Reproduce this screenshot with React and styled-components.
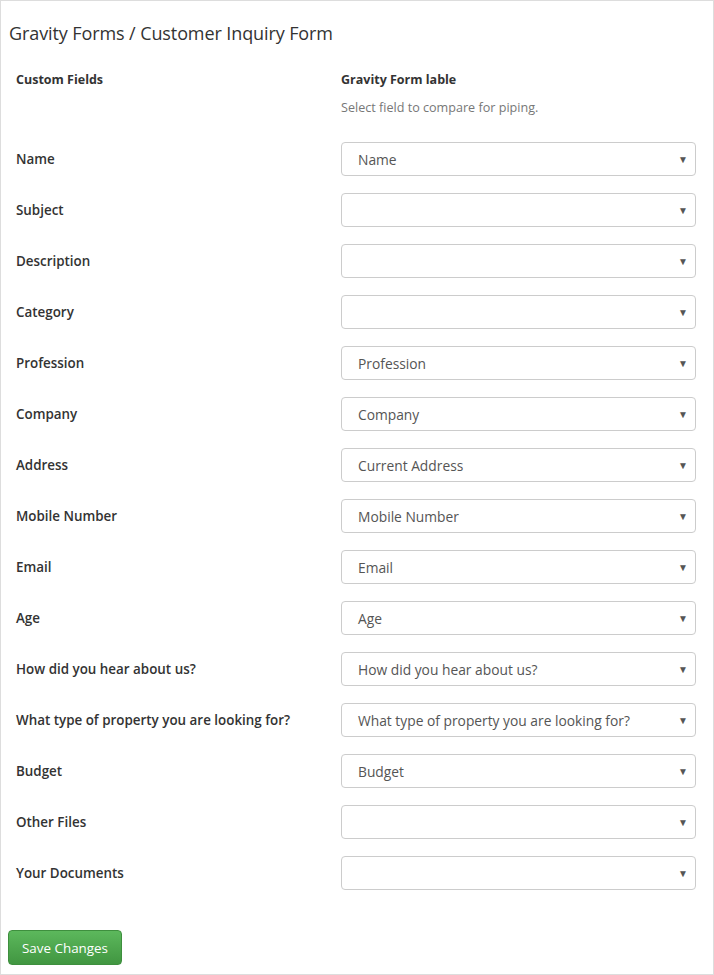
import React from 'react';
import styled, { createGlobalStyle } from 'styled-components';

const GlobalStyle = createGlobalStyle`
  html, body {
    margin: 0;
    padding: 0;
    background: #fff;
  }
  body {
    font-family: 'Open Sans', 'Noto Sans', sans-serif;
    color: #333;
  }
`;

const Panel = styled.div`
  box-sizing: border-box;
  width: 714px;
  height: 975px;
  border: 1px solid #ddd;
  background: #fff;
  display: flex;
  flex-direction: column;
`;

const Title = styled.h2`
  margin: 0;
  padding: 20px 0 0 8px;
  font-size: 18px;
  line-height: 24px;
  font-weight: 500;
  color: #333;
  letter-spacing: -0.1px;
`;

const Grid = styled.div`
  display: grid;
  grid-template-columns: 325px 1fr;
  padding: 0 17px 0 15px;
`;

const HeaderCell = styled.div`
  padding-top: 26px;
  font-size: 12.5px;
  font-weight: 700;
  line-height: 18px;
  color: #333;
`;

const Hint = styled.div`
  margin-top: 10px;
  font-size: 12.6px;
  font-weight: 400;
  line-height: 18px;
  color: #777;
`;

const Rows = styled.div`
  grid-column: 1 / -1;
  display: grid;
  grid-template-columns: 325px 1fr;
  row-gap: 17px;
  margin-top: 25px;
`;

const Label = styled.div`
  display: flex;
  align-items: center;
  height: 34px;
  font-size: 13.4px;
  font-weight: 600;
  color: #333;
`;

const Select = styled.div`
  box-sizing: border-box;
  height: 34px;
  border: 1px solid #ccc;
  border-radius: 4px;
  background: #fff;
  display: flex;
  align-items: center;
  justify-content: space-between;
  padding: 0 7px 0 16px;
  font-size: 13.8px;
  color: #555;
`;

const Arrow = styled.span`
  font-size: 10px;
  color: #555;
`;

const Footer = styled.div`
  margin-top: auto;
  padding: 0 0 9px 7px;
`;

const SaveButton = styled.button`
  box-sizing: border-box;
  width: 114px;
  height: 35px;
  border: 1px solid #3e8f3e;
  border-radius: 4px;
  background: linear-gradient(to bottom, #5cb85c 0%, #419641 100%);
  color: #fff;
  font-family: 'Open Sans', 'Noto Sans', sans-serif;
  font-size: 13.4px;
  cursor: pointer;
`;

const fields = [
  ['Name', 'Name'],
  ['Subject', ''],
  ['Description', ''],
  ['Category', ''],
  ['Profession', 'Profession'],
  ['Company', 'Company'],
  ['Address', 'Current Address'],
  ['Mobile Number', 'Mobile Number'],
  ['Email', 'Email'],
  ['Age', 'Age'],
  ['How did you hear about us?', 'How did you hear about us?'],
  ['What type of property you are looking for?', 'What type of property you are looking for?'],
  ['Budget', 'Budget'],
  ['Other Files', ''],
  ['Your Documents', ''],
];

const App = () => (
  <>
    <GlobalStyle />
    <Panel>
      <Title>Gravity Forms / Customer Inquiry Form</Title>
      <Grid>
        <HeaderCell>Custom Fields</HeaderCell>
        <HeaderCell>
          Gravity Form lable
          <Hint>Select field to compare for piping.</Hint>
        </HeaderCell>
        <Rows>
          {fields.map(([label, value]) => (
            <React.Fragment key={label}>
              <Label>{label}</Label>
              <Select>
                <span>{value}</span>
                <Arrow>▼</Arrow>
              </Select>
            </React.Fragment>
          ))}
        </Rows>
      </Grid>
      <Footer>
        <SaveButton>Save Changes</SaveButton>
      </Footer>
    </Panel>
  </>
);

export default App;
